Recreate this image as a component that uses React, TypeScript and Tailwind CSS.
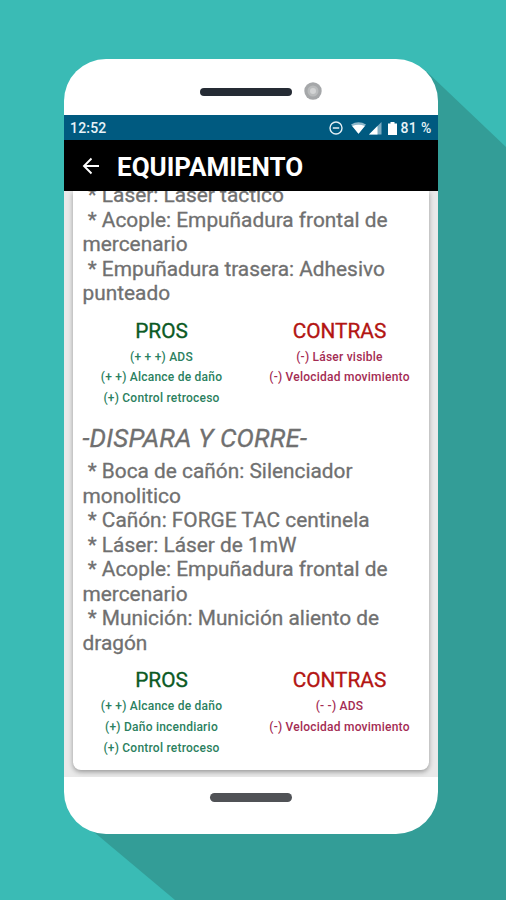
import React from "react";

type Loadout = {
  title?: string;
  lines: string[];
  pros: string[];
  contras: string[];
};

const loadouts: Loadout[] = [
  {
    lines: [
      " * Láser: Láser táctico",
      " * Acople: Empuñadura frontal de",
      "mercenario",
      " * Empuñadura trasera: Adhesivo",
      "punteado",
    ],
    pros: ["(+ + +) ADS", "(+ +) Alcance de daño", "(+) Control retroceso"],
    contras: ["(-) Láser visible", "(-) Velocidad movimiento"],
  },
  {
    title: "-DISPARA Y CORRE-",
    lines: [
      " * Boca de cañón: Silenciador",
      "monolitico",
      " * Cañón: FORGE TAC centinela",
      " * Láser: Láser de 1mW",
      " * Acople: Empuñadura frontal de",
      "mercenario",
      " * Munición: Munición aliento de",
      "dragón",
    ],
    pros: ["(+ +) Alcance de daño", "(+) Daño incendiario", "(+) Control retroceso"],
    contras: ["(- -) ADS", "(-) Velocidad movimiento"],
  },
];

function StatusBar() {
  return (
    <div className="flex h-[25px] shrink-0 items-center bg-[#005a80] pl-[6px] pr-[6px] text-[14px] font-medium text-[#e8f3f8]">
      <span className="pt-px tracking-[0.2px]">12:52</span>
      <svg className="ml-auto" width="14" height="14" viewBox="0 0 14 14" fill="none" stroke="#e4eff4" strokeWidth="1.4">
        <circle cx="7" cy="7" r="6" />
        <path d="M3.8 7h6.4" strokeWidth="1.7" />
      </svg>
      <svg className="mt-px ml-[8px]" width="15" height="12" viewBox="0 0 15 12">
        <path d="M0 2.6Q7.500-2 15 2.600L7.500 11.800Z" fill="#8fb8ca" />
        <path d="M1.200 4Q7.500 1.500 13.800 4L7.500 11.800Z" fill="#fff" />
      </svg>
      <svg className="mt-px ml-[3px]" width="13" height="13" viewBox="0 0 13 13">
        <path d="M0 12.500 12.500 0V12.500Z" fill="#7eacc1" />
        <path d="M0 12.500 8.500 4V12.500Z" fill="#fff" />
      </svg>
      <svg className="mt-px ml-[6px]" width="9" height="13" viewBox="0 0 9 13" fill="#fff">
        <path d="M2.500 0h4v1.500H9V13H0V1.500h2.500z" />
      </svg>
      <span className="ml-[4px] pt-px tracking-[0.3px] whitespace-nowrap">81 %</span>
    </div>
  );
}

function Column({ heading, items, tone, align }: { heading: string; items: string[]; tone: string; align: string }) {
  return (
    <div className={`${align} text-center`}>
      <div className={`${tone} h-[28px] text-[20.8px] leading-[25px] [-webkit-text-stroke:0.35px_currentColor]`}>{heading}</div>
      {items.map((item) => (
        <div key={item} className="h-[20.8px] text-[12px] leading-[21px] font-medium tracking-[0.23px] whitespace-nowrap">
          {item}
        </div>
      ))}
    </div>
  );
}

function LoadoutBlock({ loadout }: { loadout: Loadout }) {
  return (
    <section>
      {loadout.title && (
        <h2 className="mt-[14px] h-[36.500px] pl-[10px] text-[26px] leading-[30px] tracking-[0.15px] text-[#707070] italic whitespace-nowrap [-webkit-text-stroke:0.3px_currentColor]">
          {loadout.title}
        </h2>
      )}
      <div className="pl-[10px] text-[20.85px] leading-[24.55px] text-[#707070] whitespace-pre [-webkit-text-stroke:0.3px_currentColor]">
        {loadout.lines.map((line, i) => (
          <div key={i}>{line}</div>
        ))}
      </div>
      <div className="mt-[12.800px] flex h-[90px]">
        <Column heading="PROS" items={loadout.pros} tone="text-[#0c5a24]" align="w-[178px] text-[#2b7f60]" />
        <Column heading="CONTRAS" items={loadout.contras} tone="text-[#b31512]" align="w-[178px] text-[#a42c53]" />
      </div>
    </section>
  );
}

export default function App() {
  return (
    <main className="relative h-[900px] w-[506px] overflow-hidden bg-[#3abbb5] pt-[59px] pl-[64px] font-['Roboto',sans-serif]">
      <svg className="absolute inset-0" width="506" height="900" viewBox="0 0 506 900">
        <path d="M425 70 506 147V900H175L88 827Z" fill="#339d97" />
      </svg>
      <div className="relative flex h-[774.500px] w-[373.500px] flex-col overflow-hidden rounded-[42px] bg-white">
        <div className="flex h-[56px] shrink-0 items-center pt-[10px] pl-[136px]">
          <div className="h-[8px] w-[92px] rounded-full bg-[#252b34]" />
          <svg className="-mt-[2px] ml-[12px]" width="18" height="18" viewBox="0 0 18 18">
            <circle cx="9" cy="9" r="8.700" fill="#a5a7a9" />
            <circle cx="9" cy="9" r="5.500" fill="#b9bbbc" />
            <circle cx="9" cy="9" r="3" fill="#d2d3d4" />
          </svg>
        </div>
        <StatusBar />
        <header className="flex h-[51px] shrink-0 items-center bg-black pl-[18px] text-white">
          <svg width="18" height="18" viewBox="0 0 18 18" fill="none" stroke="white" strokeWidth="1.9">
            <path d="M17 9H2M9.500 1.500 2 9l7.500 7.500" />
          </svg>
          <h1 className="ml-[17px] pt-[3px] text-[26px] font-bold whitespace-nowrap">EQUIPAMIENTO</h1>
        </header>
        <div className="h-[586px] shrink-0 overflow-hidden bg-[#e9e9e9] pl-[8.500px]">
          <div className="h-[579px] w-[356.500px] overflow-hidden rounded-b-[8px] bg-white shadow-[0_2px_5px_rgba(0,0,0,0.35)]">
            <div className="-mt-[8px]">
              {loadouts.map((loadout, i) => (
                <LoadoutBlock key={i} loadout={loadout} />
              ))}
            </div>
          </div>
        </div>
        <div className="flex grow items-start justify-center pt-[16px]">
          <div className="h-[9px] w-[82px] rounded-full bg-[#505256]" />
        </div>
      </div>
    </main>
  );
}
